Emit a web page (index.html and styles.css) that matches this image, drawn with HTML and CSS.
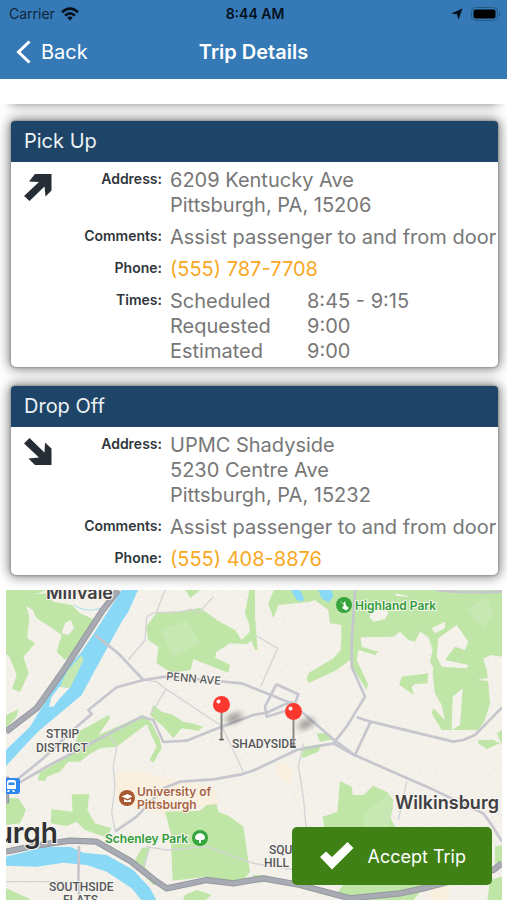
FILE: index.html
```html
<!DOCTYPE html>
<html lang="en">
<head>
<meta charset="utf-8">
<meta name="viewport" content="width=device-width, initial-scale=1">
<title>Trip Details</title>
<link rel="stylesheet" href="styles.css">
</head>
<body>
<header class="top">
  <div class="status">
    <div class="status-left">
      <span>Carrier</span>
      <svg width="18" height="14" viewBox="0 0 18 14" aria-hidden="true">
        <g fill="none" stroke="#05101c" stroke-width="2.6">
          <path d="M1 5.2Q9-2 17 5.2"/>
          <path d="M4 8.6Q9 4 14 8.6"/>
        </g>
        <path d="M6.2 10.6Q9 8.400 11.800 10.600L9 13.700Z" fill="#05101c"/>
      </svg>
    </div>
    <span class="clock">8:44 AM</span>
    <div class="status-right">
      <svg width="12" height="12" viewBox="0 0 12 12" aria-hidden="true"><path d="M11.500.5L7.500 11.800 6 6.200.3 5.500Z" fill="#05101c"/></svg>
      <svg width="30" height="14" viewBox="0 0 30 14" aria-hidden="true">
        <rect x=".5" y=".5" width="26" height="13" rx="4" fill="none" stroke="#255b88"/>
        <rect x="2.500" y="2.500" width="22" height="9" rx="2" fill="#000"/>
        <path d="M28 4.500Q31 7 28 9.500Z" fill="#255b88"/>
      </svg>
    </div>
  </div>
  <nav class="nav">
    <a class="back" href="#back">
      <svg width="16" height="24" viewBox="0 0 16 24" aria-hidden="true"><path d="M13.500 1.500L2.500 12 13.500 22.500" fill="none" stroke="#fff" stroke-width="3"/></svg>
      <span>Back</span>
    </a>
    <h1>Trip Details</h1>
  </nav>
</header>

<main>
  <div class="cards">
    <div class="card card-before"></div>

    <section class="card">
      <h2>Pick Up</h2>
      <div class="card-body">
        <svg class="arrow" width="28" height="28" viewBox="0 0 28 28" aria-hidden="true"><path d="M11 1H27.500V17.500L21.500 23.500 20.500 13.500 5.500 28 0 23 15 9 5 8.500Z" fill="#262d34"/></svg>
        <dl>
          <dt>Address:</dt>
          <dd>6209 Kentucky Ave<br>Pittsburgh, PA, 15206</dd>
          <dt>Comments:</dt>
          <dd>Assist passenger to and from door</dd>
          <dt>Phone:</dt>
          <dd><a href="tel:5557877708">(555) 787-7708</a></dd>
          <dt>Times:</dt>
          <dd class="times">
            <span>Scheduled</span><span>8:45 - 9:15</span>
            <span>Requested</span><span>9:00</span>
            <span>Estimated</span><span>9:00</span>
          </dd>
        </dl>
      </div>
    </section>

    <section class="card">
      <h2>Drop Off</h2>
      <div class="card-body">
        <svg class="arrow" width="28" height="28" viewBox="0 0 28 28" aria-hidden="true"><path d="M11 27H27.500V10.500L21 4.500 20.500 14.500 5.500 0 0 5.500 15 19.500 4.500 20.500Z" fill="#262d34"/></svg>
        <dl>
          <dt>Address:</dt>
          <dd>UPMC Shadyside<br>5230 Centre Ave<br>Pittsburgh, PA, 15232</dd>
          <dt>Comments:</dt>
          <dd>Assist passenger to and from door</dd>
          <dt>Phone:</dt>
          <dd><a href="tel:5554088876">(555) 408-8876</a></dd>
        </dl>
      </div>
    </section>
  </div>

  <div class="map">
    <svg class="map-art" viewBox="0 0 496 310" preserveAspectRatio="xMidYMin slice" role="img" aria-label="Trip map">
      <defs>
        <pattern id="streets" width="42" height="36" patternUnits="userSpaceOnUse" patternTransform="rotate(-22)">
          <path d="M0 6H42M0 24H42M8 0V36M30 0V36" fill="none" stroke="#eeebe5" stroke-width="2"/>
        </pattern>
        <filter id="soft" x="-50%" y="-50%" width="200%" height="200%"><feGaussianBlur stdDeviation="3"/></filter>
      </defs>
      <g transform="translate(-6 -10) scale(.333333)">
        <path class="land" d="M0 0H1521V980H0Z"/>
        <path fill="url(#streets)" d="M0 0H1521V980H0Z"/>
        <path class="campus" d="M345 580L410 570 520 600 640 620 660 670 580 685 500 710 420 690 350 670Z"/>
        <path class="campus" d="M830 550L860 545 885 575 865 615 835 590ZM1300 900L1350 910 1345 960H1290Z"/>

        <g class="park">
          <path d="M18 30H140L85 50 75 65 88 110 82 175 106 190 70 230 86 280 60 336 36 326 50 285 28 230 18 222Z"/>
          <path d="M75 45L140 40 160 65 215 75 240 100 285 120 235 205 195 240 170 215 185 165 150 140 110 115 98 90 75 75Z"/>
          <path d="M18 405L55 388 50 410 18 445Z"/>
          <path d="M438 140L470 98 545 95 600 83 650 120 705 150 725 180 755 150 735 100 748 30H765V175L740 192 690 190 650 215 645 232 690 255 685 278 580 238 572 270 515 278 470 250 475 200 445 180Z"/>
          <path d="M555 30H600L572 54Z"/>
          <path d="M460 375L485 395 520 405 550 425 575 430 610 440 595 452 545 445 520 475 490 440 450 405Z"/>
          <path d="M235 455L290 425 325 405 330 415 295 465 430 405 455 430 480 480 485 505 460 548 448 540 470 500 440 432 350 500 300 505 265 525 240 545 205 545 180 575 140 590 135 603 113 600 120 580 60 605 150 560 220 520Z"/>
          <path d="M215 643H268L262 690 285 730 335 745 320 772 255 750 230 725 200 738 152 730 155 688 218 695Z"/>
          <path d="M18 655L55 655 78 690 60 730 18 735Z"/>
          <path d="M495 695L600 692 620 675 650 672 655 695 690 710 730 740 750 875 720 915 620 890 518 902 512 760Z"/>
          <path d="M425 805L450 800 435 860 480 915 460 915 400 850Z"/>
          <path d="M555 945L590 930 635 945 590 980H540Z"/>
          <path d="M18 925L85 955 120 980H18Z"/>
          <path d="M822 30L805 70 820 115 835 75 930 65 945 60 985 90 990 130 1025 135 1022 210 1000 235 925 280 920 300 928 308 1010 270 1050 240 1062 270 1100 330 1104 312 1070 240 1075 210 1125 225 1135 215 1085 200 1082 172 1180 170 1200 155 1225 180 1245 185 1260 155 1285 170 1298 210 1290 245 1300 262 1298 285 1305 340 1325 375 1335 420 1300 385 1295 400 1325 450 1350 450 1435 450 1455 420 1470 370 1465 310 1460 270 1450 235 1475 225 1506 230V30Z"/>
          <path d="M1205 290L1285 280 1282 310 1245 312 1235 320 1242 345 1198 315Z"/>
          <path d="M1435 480L1480 480 1500 490 1460 507 1435 490ZM1490 460L1506 450V495Z"/>
          <path d="M950 460L975 460 1000 478 960 485ZM910 500L965 492 955 515 905 535Z"/>
          <path d="M968 710L1012 695 1020 603 1055 620 1058 645 1090 645 1120 617 1160 635 1180 660 1170 710 1190 750H975Z"/>
          <path d="M759 885L795 885 800 905 759 910Z"/>
          <path d="M1030 915L1290 900 1240 960 1120 980 1070 950 1010 940Z"/>
          <path d="M1485 800L1506 795V845L1485 850ZM1470 900L1506 890V980H1460Z"/>
          <path d="M745 110L765 110 773 210H765L753 180Z"/>
        </g>
        <g class="land">
          <path d="M195 130L212 120 222 145 205 165 185 160Z"/>
          <path d="M1115 100L1155 80 1165 100 1155 118 1120 125 1108 110Z"/>
          <path d="M1315 175L1370 135 1405 185 1395 210 1365 200 1335 240 1405 255 1400 265 1325 260 1310 230Z"/>
          <path d="M1295 145L1335 125 1335 145 1305 160Z"/>
          <path d="M1358 350L1388 325 1380 435 1355 450Z"/>
          <path d="M1185 40L1235 50 1190 48Z"/>
          <path d="M1430 300L1470 293V303Z"/>
        </g>
        <path class="park-light" d="M1400 90L1460 50 1480 100 1450 145ZM1095 700L1165 640 1180 680 1165 740H1090ZM480 150L560 120 600 190 520 230Z"/>

        <g class="water">
          <path d="M365 30H414L385 95 365 125 280 280 245 345 120 450 90 480 18 558V510L90 440 145 350 185 285 245 215 285 155Z"/>
          <path d="M18 830L130 802 210 800 250 818 320 825 400 870 450 925 480 980H440L395 925 320 875 260 855 190 848 110 860 18 857Z"/>
          <path d="M873 30H900L912 55 908 65 890 60ZM955 30H995L1000 50 985 67 965 55Z"/>
        </g>
        <path class="park-light" d="M245 225L250 240 210 325 180 320 200 275Z"/>
        <path class="land" d="M178 320L208 325 180 355 160 380 147 380 155 350Z"/>
        <path d="M220 75Q260 100 300 85" class="stream"/>

        <g class="road minor">
          <path d="M495 30L470 95 440 110 435 180 385 240M470 98L545 95 570 88 600 95 640 50"/>
          <path d="M430 300L470 305 498 328 450 405M500 328L665 438 690 490M330 470L350 500 340 560 345 620 335 700 345 750"/>
          <path d="M765 165L833 205 782 320M910 490L895 560 910 650 920 760M1220 605L1195 720"/>
          <path d="M440 800L500 810 620 800 760 850M18 905H240M450 800L430 860"/>
          <path d="M690 490L730 575M759 850L890 870"/>
        </g>
        <g class="road">
          <path d="M285 165L355 220 430 300"/>
          <path d="M225 445L275 402 265 390 350 322 430 300 495 290 620 300 725 310 775 330 870 368 910 400 1000 478 1063 525"/>
          <path d="M300 475L425 410 460 420 490 486 560 482 640 450 760 405 800 398 850 375 880 365"/>
          <path d="M345 755L410 710 490 625 540 605 640 598 725 583 759 572 890 510 1000 490 1040 440 1095 350 1055 260V190L1065 30"/>
          <path d="M829 313L895 343 885 370M829 313L795 380 800 410 865 390 880 370M1070 412L1112 425 1065 525M1112 425L1360 485 1390 480 1425 465 1506 382"/>
          <path d="M1000 490L1063 525 1280 620 1450 700 1475 735 1506 785"/>
          <path d="M38 610L130 535 225 445M38 620L140 560 235 510 300 475M237 798L235 900 240 980"/>
        </g>
        <path class="road" d="M1310 30Q1380 40 1506 35"/>

        <g class="highway-edge">
          <path d="M355 30L305 95 195 265 110 385 18 455M18 815L100 798 210 782 290 785 390 842 470 905 500 925 620 900 700 910 790 895 900 915 1050 955 1200 940 1270 925 1480 870 1506 850M18 590V670"/>
        </g>
        <g class="highway">
          <path d="M355 30L305 95 195 265 110 385 18 455M18 815L100 798 210 782 290 785 390 842 470 905 500 925 620 900 700 910 790 895 900 915 1050 955 1200 940 1270 925 1480 870 1506 850M18 590V670"/>
        </g>
      </g>

      <g class="label">
        <text class="town" x="40" y="9">Millvale</text>
        <text class="area" x="40" y="148">STRIP</text>
        <text class="area" x="30" y="162">DISTRICT</text>
        <text class="area" x="226" y="158">SHADYSIDE</text>
        <text class="area" x="43" y="301">SOUTHSIDE</text>
        <text class="area" x="57" y="314">FLATS</text>
        <text class="area" x="263" y="264">SQUIRREL</text>
        <text class="area" x="258" y="277">HILL SOUTH</text>
        <text class="street" x="160" y="90" transform="rotate(5 160 90)">PENN AVE</text>
        <text class="suburb" x="389" y="219">Wilkinsburg</text>
        <text class="city" x="52" y="253" text-anchor="end">Pittsburgh</text>
        <text class="place green" x="349" y="20">Highland Park</text>
        <text class="place green" x="99" y="253">Schenley Park</text>
        <text class="place brown" x="131" y="206">University of</text>
        <text class="place brown" x="131" y="219">Pittsburgh</text>
      </g>

      <g>
        <circle cx="338" cy="15" r="8" fill="#35a53c"/>
        <path d="M333.500 10.500L338 15 336 18 340 20.500 343 18 340 15.500 339 11 337.500 13.500Z" fill="#fff"/>
        <circle cx="194" cy="248" r="8" fill="#35a53c"/>
        <path d="M194 243Q199 244 199 248 199 250 195 250V253H193V250Q189 250 189 248 189 244 194 243Z" fill="#fff"/>
        <circle cx="121" cy="208" r="8" fill="#a9572f"/>
        <path d="M115.500 206.500L121.500 204 126.500 206.500 121.500 209ZM118 209L121.500 210.500 125 209V212H118Z" fill="#fff"/>
        <path d="M0 188H11Q14 188 14 191V201Q14 204 11 204H0Z" fill="#2d87ee"/>
        <path d="M3 190H8Q10 190 10 192V199H1V192Q1 190 3 190ZM2.500 192.500V195H8.500V192.500ZM2 200L1 202H3L4 200ZM8 200L9 202H7L6 200Z" fill="#fff" fill-rule="evenodd"/>
      </g>

      <g>
        <ellipse cx="228" cy="128" rx="9" ry="4" class="pin-shadow" transform="rotate(-20 228 128)"/>
        <ellipse cx="215.500" cy="149.500" rx="2.500" ry="1" fill="#555"/>
        <path d="M215.500 120V149" class="pin-stem"/>
        <circle cx="215.500" cy="114.500" r="8.500" fill="#fb3830"/>
        <circle cx="212.500" cy="111.500" r="2" fill="#fff"/>
        <ellipse cx="300" cy="134" rx="9" ry="4" class="pin-shadow" transform="rotate(-25 300 134)"/>
        <ellipse cx="287.500" cy="156.500" rx="2.500" ry="1" fill="#555"/>
        <path d="M287.500 127V156" class="pin-stem"/>
        <circle cx="287.500" cy="121.500" r="8.500" fill="#fb3830"/>
        <circle cx="284.500" cy="118.500" r="2" fill="#fff"/>
      </g>
    </svg>
    <button class="accept" type="button">
      <svg width="34" height="28" viewBox="0 0 34 28" aria-hidden="true"><path d="M0 15L6 9.500 12 15 27.500 0 33.500 6 12 27.500Z" fill="#fff"/></svg>
      <span>Accept Trip</span>
    </button>
  </div>
</main>
</body>
</html>
```
FILE: styles.css
```css
* {
  box-sizing: border-box;
}

body {
  margin: 0;
  min-height: 100vh;
  display: flex;
  flex-direction: column;
  background: #fff;
  color: #777;
  font-family: Inter, "Liberation Sans", sans-serif;
  font-size: 20px;
  line-height: 25px;
}

.top {
  background: #357ab7;
  padding-bottom: 12px;
}

.status {
  display: grid;
  grid-template-columns: 1fr auto 1fr;
  align-items: center;
  height: 27px;
  padding: 0 6px 0 9px;
  color: #10263a;
  font-size: 14px;
}

.status-left,
.status-right {
  display: flex;
  align-items: center;
  gap: 6px;
}

.status-right {
  justify-content: flex-end;
  gap: 8px;
}

.clock {
  color: #05101c;
  font-weight: 600;
}

.nav {
  display: grid;
  grid-template-columns: 1fr auto 1fr;
  align-items: center;
  height: 40px;
  padding: 10px 16px 0;
  color: #fff;
}

.back {
  display: flex;
  align-items: center;
  gap: 9px;
  color: #fff;
  text-decoration: none;
}

h1 {
  margin: 0;
  font-size: 20px;
  font-weight: 600;
}

main {
  flex: 1;
  display: flex;
  flex-direction: column;
  padding-top: 25px;
}

.cards {
  display: flex;
  flex-direction: column;
  gap: 19px;
  padding: 0 9px 15px 11px;
  overflow: hidden;
}

.card {
  border-radius: 5px;
  background: #fff;
  box-shadow: 0 0 2px 1px #999, 0 0 12px 2px rgba(0, 0, 0, 0.5);
}

.card-before {
  height: 20px;
  margin-top: -22px;
}

h2 {
  margin: 0;
  padding: 8px 13px;
  border-radius: 4px 4px 0 0;
  background: #1e4567;
  color: #edf2f6;
  font-size: 20px;
  font-weight: 400;
}

.card-body {
  display: grid;
  grid-template-columns: 28px 1fr;
  padding: 6px 0 3px 13px;
}

.arrow {
  margin-top: 5px;
}

dl {
  display: grid;
  grid-template-columns: 110px 1fr;
  gap: 7px 8px;
  margin: 0;
}

dt {
  color: #30363c;
  font-size: 14px;
  font-weight: 600;
  line-height: 22px;
  text-align: right;
}

dd {
  margin: 0;
}

dd a {
  color: #f9a825;
  text-decoration: none;
}

.times {
  display: grid;
  grid-template-columns: 137px 1fr;
}

.map {
  position: relative;
  flex: 1;
  display: flex;
  min-height: 310px;
  margin: 0 5px 0 6px;
}

.map-art {
  flex: 1;
  width: 100%;
  height: auto;
  min-width: 0;
}

.land { fill: #f5f2eb; }
.campus { fill: #f8efdf; }
.park { fill: #bfe5a7; }
.park-light { fill: #c8e8b3; }
.water { fill: #89d8f5; }

.stream {
  fill: none;
  stroke: #a9def0;
  stroke-width: 3;
}

.road {
  fill: none;
  stroke: #c6c6ce;
  stroke-width: 8;
  stroke-linejoin: round;
}

.minor {
  stroke: #d4d4d7;
  stroke-width: 4;
}

.highway-edge {
  fill: none;
  stroke: #9698a0;
  stroke-width: 19;
  stroke-linejoin: round;
}

.highway {
  fill: none;
  stroke: #a9abb4;
  stroke-width: 13;
  stroke-linejoin: round;
}

.label text {
  fill: #55565a;
  stroke: #f8f6f0;
  stroke-width: 2px;
  stroke-linejoin: round;
  paint-order: stroke;
}

.label .area {
  font-family: Roboto, sans-serif;
  font-size: 12px;
  font-weight: 500;
}

.label .street {
  font-size: 11px;
  font-weight: 500;
}

.label .town,
.label .suburb {
  fill: #3f4043;
  font-size: 18px;
  font-weight: 600;
}

.label .city {
  fill: #303134;
  font-size: 28px;
  font-weight: 600;
}

.label .place {
  font-size: 12px;
  font-weight: 600;
}

.label .green { fill: #2f9d3a; }
.label .brown { fill: #a9623f; }

.pin-stem {
  fill: none;
  stroke: #8a8a8a;
  stroke-width: 2;
}

.pin-shadow {
  fill: rgba(0, 0, 0, 0.4);
  filter: url(#soft);
}

.accept {
  position: absolute;
  right: 10px;
  bottom: 15px;
  display: flex;
  align-items: center;
  gap: 14px;
  height: 58px;
  padding: 0 26px 0 28px;
  border: 0;
  border-radius: 5px;
  background: #3f8115;
  color: #fff;
  font-family: inherit;
  font-size: 18px;
}
```
